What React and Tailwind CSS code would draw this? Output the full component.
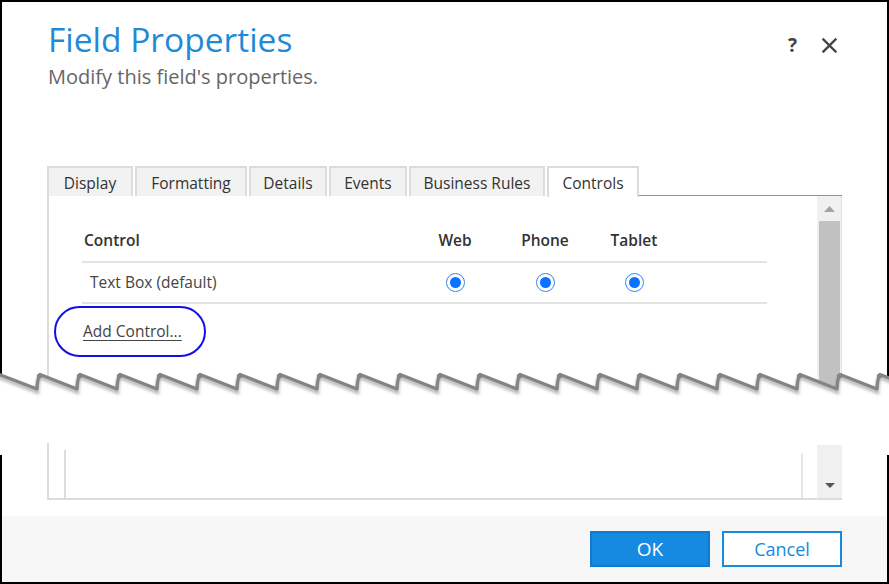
import React from "react";

function Radio() {
  return (
    <div className="w-[19px] h-[19px] rounded-full border-[1.5px] border-[#2f86ff] flex items-center justify-center bg-white">
      <div className="w-[11px] h-[11px] rounded-full bg-[#0b72ff]" />
    </div>
  );
}

function Tear() {
  // local y = page y - 362
  let line = "M -2 12";
  for (let k = 0; k < 23; k++) {
    const x = 40 * k;
    line += ` L ${x + 37} 27 Q ${x + 37.5} 16 ${x + 40} 12.5`;
  }
  const fill = line + " L 900 40 L -2 40 Z";
  const blobs = [];
  for (let k = 1; k < 23; k++) {
    blobs.push(<ellipse key={k} cx={40 * k - 0.5} cy={14} rx={2.7} ry={2.3} fill="#848484" filter="url(#soft)" />);
  }
  return (
    <svg className="absolute left-0 top-[362px] z-10" width="889" height="40" viewBox="0 0 889 40">
      <defs>
        <filter id="soft" x="-20%" y="-50%" width="140%" height="200%">
          <feGaussianBlur stdDeviation="0.5" />
        </filter>
        <filter id="shadow" x="-20%" y="-50%" width="140%" height="200%">
          <feGaussianBlur stdDeviation="1.6" />
        </filter>
      </defs>
      <path d={fill} fill="#ffffff" />
      <path d={line} fill="none" stroke="#909090" strokeWidth="4.5" strokeOpacity="0.6" transform="translate(0 2.5)" filter="url(#shadow)" />
      <path d={line} fill="none" stroke="#848484" strokeWidth="3.2" strokeLinejoin="round" filter="url(#soft)" />
      {blobs}
    </svg>
  );
}

export default function App() {
  const font = "font-['Open_Sans','Noto_Sans',sans-serif]";
  const tabs = [
    { label: "Display", w: "w-[86px]" },
    { label: "Formatting", w: "w-[112px]" },
    { label: "Details", w: "w-[78px]" },
    { label: "Events", w: "w-[78px]" },
    { label: "Business Rules", w: "w-[136px]" },
  ];
  return (
    <div className={`w-[889px] h-[584px] bg-white relative overflow-hidden flex flex-col ${font}`}>
      {/* Top torn piece */}
      <div className="h-[390px] border-t-2 border-l-2 border-r-2 border-black flex flex-col shrink-0">
        <div className="flex justify-between pl-[46px] pr-[50px] pt-[17px]">
          <div className="flex flex-col">
            <div className="text-[33.5px] leading-[40px] text-[#1f8ad8]">Field Properties</div>
            <div className="mt-[4px] text-[20px] leading-[28px] text-[#666666]">Modify this field's properties.</div>
          </div>
          <div className="flex items-start gap-[25px] pt-[17px]">
            <span className="text-[19px] leading-[19px] font-bold text-[#444444]">?</span>
            <svg width="15" height="15" viewBox="0 0 15 15" className="mt-[2px]">
              <path d="M1.5 1.5 L13.5 13.5 M13.5 1.5 L1.5 13.5" stroke="#444444" strokeWidth="2.4" strokeLinecap="square" />
            </svg>
          </div>
        </div>

        {/* Tabs */}
        <div className="mt-[75px] ml-[45px] w-[795px] flex gap-[2px] h-[30px]">
          {tabs.map((t) => (
            <div
              key={t.label}
              className={`${t.w} h-[30px] pt-[3px] bg-[#f2f2f2] border-t-2 border-l-2 border-r-2 border-[#dcdcdc] flex items-center justify-center text-[15.5px] text-[#333333] leading-none`}
            >
              {t.label}
            </div>
          ))}
          <div className="w-[92px] h-[31px] pt-[2px] bg-white border-t-2 border-l-2 border-r-2 border-[#dcdcdc] flex items-center justify-center text-[15.5px] text-[#333333] leading-none z-[1]">
            Controls
          </div>
          <div className="flex-1 -ml-[2px] border-b border-[#8f9399]" />
        </div>

        {/* Panel */}
        <div className="ml-[45px] w-[795px] flex-1 flex border-l-2 border-[#dcdcdc]">
          <div className="flex-1 flex flex-col">
            <div className="mt-[27px] ml-[33px] w-[685px]">
              <div className="grid grid-cols-[328px_90px_90px_88px_1fr] h-[40px] items-center border-b-2 border-[#e3e3e3] text-[15.5px] font-semibold text-[#333333]">
                <div className="pl-[2px] -mt-[2px]">Control</div>
                <div className="text-center -mt-[2px]">Web</div>
                <div className="text-center -mt-[2px]">Phone</div>
                <div className="text-center -mt-[2px]">Tablet</div>
                <div />
              </div>
              <div className="grid grid-cols-[328px_90px_90px_88px_1fr] h-[41px] items-center border-b-2 border-[#e3e3e3] text-[15.5px] text-[#444444]">
                <div className="pl-[8px]">Text Box (default)</div>
                <div className="flex justify-center"><Radio /></div>
                <div className="flex justify-center"><Radio /></div>
                <div className="flex justify-center"><Radio /></div>
                <div />
              </div>
            </div>
            <div className="mt-[2px] ml-[5px] w-[152px] h-[51px] rounded-full border-2 border-[#1010e6] flex items-center pl-[27px]">
              <span className="text-[15.5px] text-[#444444] underline underline-offset-[3px]">Add Control...</span>
            </div>
          </div>
          <div className="w-[25px] bg-[#f0f0f0] border-r border-[#e2e2e2] flex flex-col items-center">
            <svg width="11" height="6" viewBox="0 0 11 6" className="mt-[10px]">
              <path d="M0 6 L5.5 0 L11 6 Z" fill="#a3a3a3" />
            </svg>
            <div className="mt-[9px] w-[21px] flex-1 bg-[#c1c1c1]" />
          </div>
        </div>
      </div>

      <Tear />

      {/* gap */}
      <div className="h-[65px] shrink-0" />

      {/* Bottom torn piece */}
      <div className="flex-1 border-l-2 border-r-2 border-b-2 border-black flex flex-col">
        <div className="-mt-[12px] ml-[45px] w-[795px] h-[57px] border-l-2 border-b-2 border-[#dcdcdc] flex">
          <div className="ml-[15px] mt-[7px] w-[2px] bg-[#dcdcdc]" />
          <div className="flex-1" />
          <div className="mt-[10px] w-[2px] bg-[#e6e6e6]" />
          <div className="ml-[14px] w-[25px] bg-[#f0f0f0] mt-[2px] flex flex-col items-center justify-end pb-[10px]">
            <svg width="10" height="5" viewBox="0 0 10 5">
              <path d="M0 0 L10 0 L5 5 Z" fill="#555555" />
            </svg>
          </div>
        </div>
        <div className="mt-[16px] flex-1 bg-[#f7f7f7] flex justify-end items-start pt-[15px] pr-[45px] gap-[12px]">
          <button className="w-[120px] h-[36px] bg-[#168ae0] border-2 border-[#0f7ad0] text-white text-[19px] leading-none flex items-center justify-center">
            OK
          </button>
          <button className="w-[120px] h-[36px] bg-white border-2 border-[#168ae0] text-[#168ae0] text-[18px] leading-none flex items-center justify-center">
            Cancel
          </button>
        </div>
      </div>
    </div>
  );
}
